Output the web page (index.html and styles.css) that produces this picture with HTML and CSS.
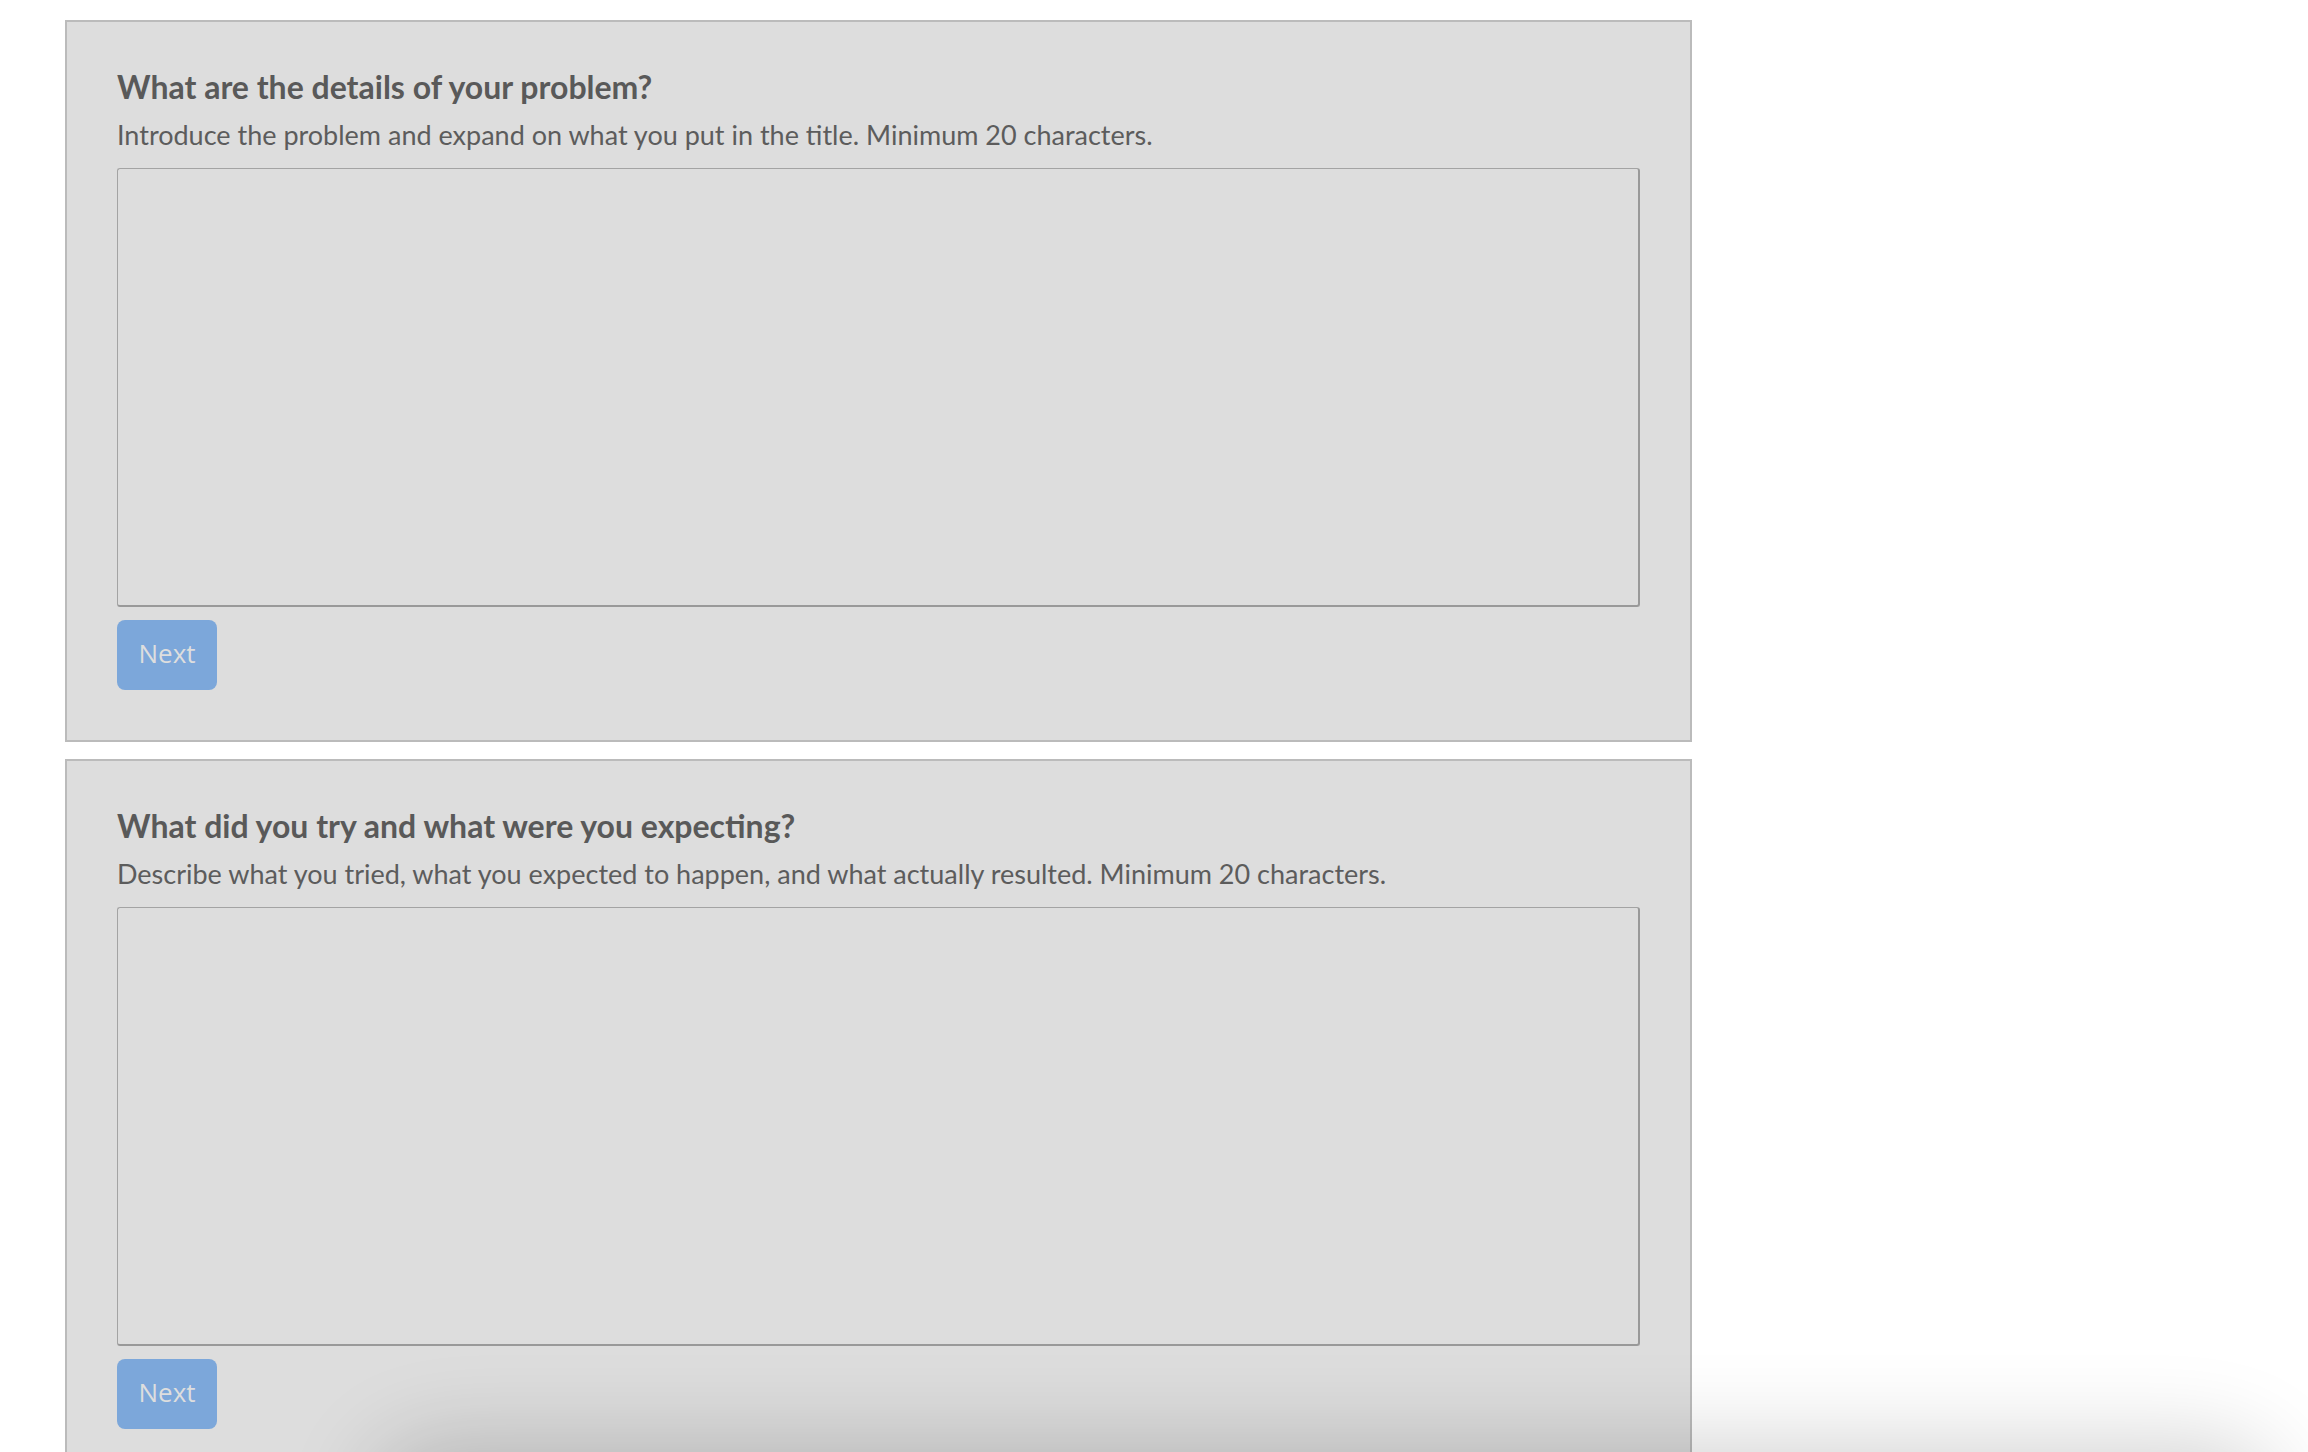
FILE: index.html
```html
<!DOCTYPE html>
<html lang="en">
<head>
  <meta charset="UTF-8">
  <meta name="viewport" content="width=device-width, initial-scale=1.0">
  <title>Ask a Question</title>
  <link rel="stylesheet" href="styles.css">
</head>
<body>
  <div class="steps">
    <section class="step-card">
      <h2>What are the details of your problem?</h2>
      <p>Introduce the problem and expand on what you put in the title. Minimum 20 characters.</p>
      <textarea id="details" name="details"></textarea>
      <button type="button" class="next-btn">Next</button>
    </section>

    <section class="step-card">
      <h2>What did you try and what were you expecting?</h2>
      <p>Describe what you tried, what you expected to happen, and what actually resulted. Minimum 20 characters.</p>
      <textarea id="expected" name="expected"></textarea>
      <button type="button" class="next-btn">Next</button>
    </section>
  </div>

  <div class="dock-shadow"></div>
</body>
</html>
```

FILE: styles.css
```css
body {
  font-family: Lato, "Noto Sans", sans-serif;
  margin: 0;
  padding: 0;
  background-color: #fff;
  overflow: hidden;
}
.steps {
  width: 1627px;
  margin: 20px 0 0 65px;
  display: flex;
  flex-direction: column;
  gap: 17px;
}
.step-card {
  background: #dddddd;
  border: 2px solid #bbbbbb;
  padding: 46px 50px 50px;
  display: flex;
  flex-direction: column;
  align-items: flex-start;
}
.step-card h2 {
  margin: 0;
  font-size: 32px;
  line-height: 38px;
  font-weight: 700;
  color: #595959;
}
.step-card p {
  margin: 13px 0 17px;
  font-size: 27px;
  line-height: 32px;
  color: #5c5c5c;
}
.step-card textarea {
  box-sizing: border-box;
  width: 100%;
  height: 439px;
  margin: 0;
  background: transparent;
  border-style: solid;
  border-color: #a3a3a3 #999 #999 #a3a3a3;
  border-width: 1px 2px 2px 1px;
  border-radius: 3px;
  resize: none;
}
.step-card .next-btn {
  margin-top: 13px;
  width: 100px;
  height: 70px;
  padding: 0 0 5px;
  font-family: "Open Sans", sans-serif;
  font-size: 26px;
  color: #dedede;
  background: #7ca7da;
  border: none;
  border-radius: 8px;
  cursor: pointer;
}
.dock-shadow {
  position: fixed;
  left: 380px;
  right: 40px;
  bottom: -120px;
  height: 120px;
  border-radius: 60px;
  box-shadow: 0 0 90px 10px rgba(0, 0, 0, 0.18);
  pointer-events: none;
}
```
